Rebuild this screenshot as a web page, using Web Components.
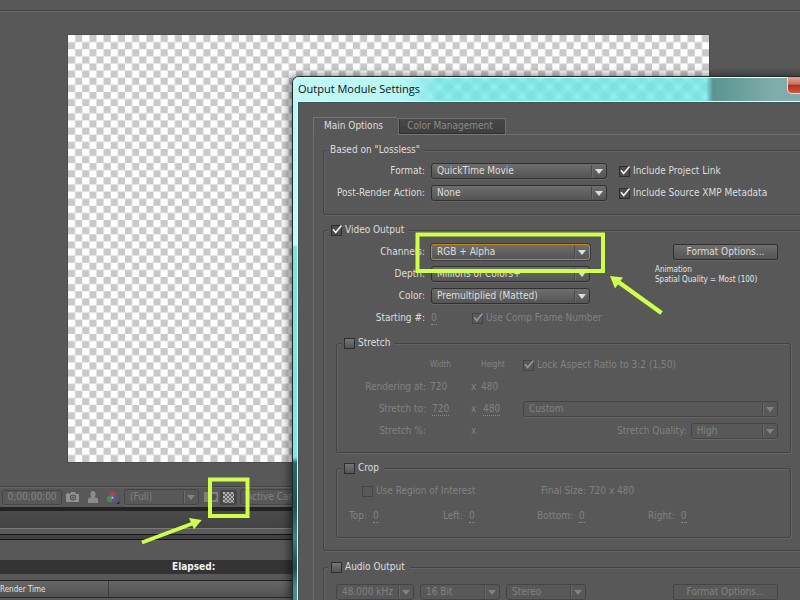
<!DOCTYPE html>
<html lang="en">
<head>
<meta charset="utf-8">
<title>Output Module Settings</title>
<style>
html,body{margin:0;height:100%;overflow:hidden;background:#585858}
body{font:10px/16px "DejaVu Sans Condensed","DejaVu Sans",sans-serif;color:#dedede}
</style>
</head>
<body>
<comp-workspace></comp-workspace>
<script>
function define(name, html, setup){
  customElements.define(name, class extends HTMLElement{
    connectedCallback(){
      if(this.shadowRoot) return;
      const t=document.createElement('template');
      t.innerHTML=html;
      this.attachShadow({mode:'open'}).append(t.content.cloneNode(true));
      if(setup) setup(this,this.shadowRoot);
    }
  });
}

/* Drop-down with an optional label in front */
define('ae-select', `
<style>
:host{display:flex;align-items:center;gap:6px;height:16px;color:#dedede}
label{flex:0 0 var(--label,auto);text-align:right;white-space:nowrap}
label:empty{display:none}
.box{flex:1;min-width:0;display:grid;grid-template-columns:1fr 15px;align-items:center;height:16px;box-sizing:border-box;
 border:1px solid #303030;border-radius:3px;background:linear-gradient(#6e6e6e,#545454);box-shadow:0 1px #666}
select{grid-area:1/1/2/3;appearance:none;border:0;outline:0;background:none;color:inherit;font:inherit;line-height:14px;height:14px;padding:0 16px 0 5px;margin:0;width:100%;opacity:1}
i{grid-area:1/2;pointer-events:none;height:12px;border-left:1px solid #484848;box-shadow:inset 1px 0 #6b6b6b;display:grid;place-items:center}
i::after{content:"";border:4px solid transparent;border-top:5px solid currentColor;border-bottom:0}
:host([hot]) .box{border-color:#c08a10;box-shadow:0 0 0 1px #3d3d3d}
:host([off]) .box{color:#828282;background:none;border-color:#454545}
:host([faded]){color:#828282;gap:4px}
</style><label for="s"></label><div class="box"><select id="s"><option></option></select><i></i></div>`,
(h,r)=>{const l=h.getAttribute('label')||'';r.querySelector('label').textContent=l;
 const s=r.querySelector('select');r.querySelector('option').textContent=h.getAttribute('value');
 if(!l)s.setAttribute('aria-label',h.getAttribute('name'));});

/* Tick box and its label */
define('ae-check', `
<style>
:host{display:flex;height:16px;color:#dedede}
label{display:flex;align-items:center;gap:3px;white-space:nowrap}
span{display:grid;width:11px;height:11px}
input,svg{grid-area:1/1;margin:0}
input{appearance:none;width:11px;height:11px;box-sizing:border-box;border:1px solid #2e2e2e;background:linear-gradient(#757575,#545454)}
svg{width:11px;height:11px;overflow:visible;pointer-events:none;display:none;color:#f0f0f0}
input:checked+svg{display:block}
input:checked{background:#4c4c4c}
:host([off]){color:#828282}
:host([off]) input{background:none;border-color:#454545}
:host([off]) svg{color:#9a9a9a}
</style><label><span><input type="checkbox"><svg viewBox="0 0 11 11" fill="none" stroke="currentColor" stroke-width="1.6"><path d="M2 4.300L4.700 7.500 10.500 .5"/></svg></span><slot></slot></label>`,
(h,r)=>{r.querySelector('input').checked=h.hasAttribute('checked');});

/* Editable number with a dotted underline */
define('ae-value', `
<style>
:host{display:inline-flex;align-items:center;gap:6px;height:16px;color:#828282}
label{flex:0 0 var(--label,auto);text-align:right;white-space:nowrap}
label:empty{display:none}
input{width:6px;height:13px;box-sizing:border-box;padding:0;margin:0;border:0;border-bottom:1px dotted #8a8a8a;background:none;color:#828282;font:inherit;line-height:12px;outline:0}
:host([wide]) input{width:17px}
:host([bright]) label{color:#dedede}
</style><label for="v"></label><input id="v" type="text">`,
(h,r)=>{const l=h.getAttribute('label')||'',i=r.querySelector('input');r.querySelector('label').textContent=l;
 i.value=h.getAttribute('value');if(!l)i.setAttribute('aria-label',h.getAttribute('name'));});

define('ae-button', `
<style>
:host{display:block;height:16px}
button{display:block;width:100%;height:16px;box-sizing:border-box;border:1px solid #303030;border-radius:2px;background:linear-gradient(#6e6e6e,#545454);box-shadow:0 1px #666;color:#dedede;font:inherit;line-height:14px;padding:0}
:host([off]) button{background:none;border-color:#454545;color:#828282}
</style><button type="button"><slot></slot></button>`);

/* Etched frame with a legend in its top border */
define('group-box', `
<style>
:host{display:block}
fieldset{display:block;min-width:0;margin:0;padding:var(--pad,0);border:1px solid #434343;border-radius:3px;box-shadow:1px 1px #656565,inset 1px 1px #656565}
legend{padding:0 5px 0 3px;margin-left:3px;height:16px;background:#585858}
:host([checkable]) legend{margin-left:4px}
</style><fieldset><legend><slot name="legend"></slot></legend><slot></slot></fieldset>`);

define('tab-strip', `
<style>
:host{display:flex;align-items:flex-end}
button{box-sizing:border-box;font:inherit;line-height:14px;margin:0;padding:0 0 2px;white-space:nowrap}
.on{width:84px;height:18px;border:1px solid #747474;border-width:1px 0 0 1px;background:#585858;color:#dedede;border-radius:1px 0 0;padding-right:4px}
.off{width:108px;height:17px;border:1px solid #707070;border-bottom-color:#777;background:linear-gradient(#484848,#3e3e3e);box-shadow:inset 1px 0 #303030,inset 0 -1px #303030;color:#8b8b8b;margin-left:1px;padding-right:4px}
hr{flex:1;margin:0;border:0;border-top:1px solid #6c6c6c}
</style><button class="on" type="button" role="tab" aria-selected="true">Main Options</button><button class="off" type="button" role="tab" aria-selected="false">Color Management</button><hr>`);

define('glass-window', `
<style>
:host{display:flex;flex-direction:column;box-sizing:border-box;border:1px solid #1d2b2b;border-right:0;border-bottom:0;border-radius:7px 0 0 0;overflow:hidden;
 box-shadow:-2px 0 9px 1px rgba(0,0,0,.5);
 background:linear-gradient(#b9f7f5,#c6faf9 168px,#82e0dd 170px,#82e8e4 380px,#27696a 386px,#1e5558 430px,#3d8385 460px,#1f4c50 490px,#4b8d8e 510px)}
header{display:flex;justify-content:space-between;height:24px;box-sizing:border-box;padding:2px 0 0 5px;border-top:1px solid #e4ffff;color:#0b1414;
 font:11px/18px "Open Sans","Noto Sans",sans-serif;
 background:linear-gradient(90deg,#c2f8f6 0,#b6f6f4 110px,#a0f2f000 145px,transparent 413px,#5a9491 420px,#80adaa 480px),
 repeating-linear-gradient(45deg,#72d6d855 0 5px,transparent 8px 11px,#72d6d855 13px),
 repeating-linear-gradient(-45deg,#72d6d855 0 5px,transparent 8px 11px,#72d6d855 13px),#8ef0ee}
h1{margin:0;font:inherit}
button{width:34px;height:17px;margin:-3px -15px 0 0;border:1px solid #f6d6d2;border-top:0;border-radius:0 0 5px 5px;padding:0;background:linear-gradient(#e0a39a,#cf7064 45%,#b02f1e 50%,#cc5b44)}
main{flex:1;min-height:0;overflow:hidden;margin-left:4px;box-sizing:border-box;padding:15px 0 0 15px;border:1px solid #d8ffff;border-width:1px 0 0 1px;background:#585858;box-shadow:inset 1px 1px #3b5555}
</style>
<header><h1><slot name="title"></slot></h1><button type="button" aria-label="Close"></button></header><main><slot></slot></main>`);

define('module-settings', `
<style>
:host{display:block}
.page{border-left:1px solid #6c6c6c;padding:7px 0 0 9px}
.row{display:grid;align-items:center;height:22px;white-space:nowrap}
.based{grid-template-columns:283px 1fr;column-gap:12px}
.video{grid-template-columns:266px 1fr 105px 27px}
.start{grid-template-columns:148px 1fr}
.info{font-size:8px;line-height:10px;width:122px;margin-top:2px;color:#e6e6e6;grid-area:1/3/2/5;margin-left:-18px}
.stretch{grid-template-columns:89px 41px 10px 42px 1fr;color:#828282}
.stretch>:first-child{text-align:right}
.small{font-size:8px}
.quality{grid-column:5;display:grid;grid-template-columns:1fr 161px}
.crop1{grid-template-columns:25px 179px 1fr;color:#828282}
.crop2{grid-template-columns:94px 94px 111px 1fr;margin:3px 0 0 12px}
.audio{grid-template-columns:78px 80px 80px 1fr 105px;column-gap:6px;padding:0 27px 0 12px}
.inner{margin:0 14px 0 12px}
.vgroup{--label:101px}
</style>
<tab-strip></tab-strip>
<div class="page">
 <group-box style="--pad:2px 0 10px">
  <span slot="legend">Based on "Lossless"</span>
  <div class="row based"><ae-select style="--label:101px" label="Format:" value="QuickTime Movie"></ae-select><ae-check checked>Include Project Link</ae-check></div>
  <div class="row based"><ae-select style="--label:101px" label="Post-Render Action:" value="None"></ae-select><ae-check checked>Include Source XMP Metadata</ae-check></div>
 </group-box>
 <group-box checkable style="margin-top:7px;--pad:3px 0 12px">
  <ae-check slot="legend" checked>Video Output</ae-check>
  <div class="vgroup">
  <div class="row video"><ae-select hot label="Channels:" value="RGB + Alpha"></ae-select><span></span><ae-button>Format Options...</ae-button></div>
  <div class="row video"><ae-select label="Depth:" value="Millions of Colors+"></ae-select><div class="info">Animation<br>Spatial Quality = Most (100)</div></div>
  <div class="row video"><ae-select label="Color:" value="Premultiplied (Matted)"></ae-select></div>
  <div class="row start"><ae-value bright label="Starting #:" value="0"></ae-value><ae-check off checked>Use Comp Frame Number</ae-check></div>
  </div>
  <group-box checkable class="inner" style="margin-top:6px;--pad:3px 12px 10px 0">
   <ae-check slot="legend">Stretch</ae-check>
   <div class="row stretch"><span></span><span class="small" style="padding-left:4px">Width</span><span></span><span class="small" style="padding-left:4px">Height</span><ae-check off checked style="margin-left:4px">Lock Aspect Ratio to 3:2 (1,50)</ae-check></div>
   <div class="row stretch"><span>Rendering at:</span><span style="padding-left:4px">720</span><span style="padding-left:4px">x</span><span style="padding-left:4px">480</span></div>
   <div class="row stretch"><span>Stretch to:</span><ae-value wide name="Stretch width" value="720" style="padding-left:6px"></ae-value><span style="padding-left:4px">x</span><ae-value wide name="Stretch height" value="480" style="padding-left:6px"></ae-value><ae-select off name="Stretch preset" value="Custom" style="margin-left:4px"></ae-select></div>
   <div class="row stretch"><span>Stretch %:</span><span></span><span style="padding-left:4px">x</span><div class="quality"><span></span><ae-select off faded label="Stretch Quality:" value="High"></ae-select></div></div>
  </group-box>
  <group-box checkable class="inner" style="margin-top:7px;--pad:4px 12px 10px 0">
   <ae-check slot="legend">Crop</ae-check>
   <div class="row crop1"><span></span><ae-check off>Use Region of Interest</ae-check><span>Final Size: 720 x 480</span></div>
   <div class="row crop2"><ae-value label="Top:" value="0"></ae-value><ae-value label="Left:" value="0"></ae-value><ae-value label="Bottom:" value="0"></ae-value><ae-value label="Right:" value="0"></ae-value></div>
  </group-box>
 </group-box>
 <group-box checkable style="margin-top:8px;--pad:6px 0 12px">
  <ae-check slot="legend">Audio Output</ae-check>
  <div class="row audio"><ae-select off name="Sample rate" value="48.000 kHz"></ae-select><ae-select off name="Sample size" value="16 Bit"></ae-select><ae-select off name="Channels" value="Stereo"></ae-select><span></span><ae-button off>Format Options...</ae-button></div>
 </group-box>
</div>`);

define('comp-viewer', `
<style>
:host{display:flex;flex-direction:column}
.top{height:10px;border-bottom:1px solid #444;box-shadow:0 1px #686868;flex:none}
.canvas{height:427px;flex:none;margin:24px 91px 24px 68px;display:block;outline:1px solid #4c4c4c}
.canvas svg{display:block;width:100%;height:100%}
.bar{display:flex;align-items:center;height:21px;border-top:1px solid #434343;box-shadow:inset 0 1px #666;color:#8a8a8a;padding-left:2px;box-sizing:border-box;white-space:nowrap}
.time{width:60px;height:15px;box-sizing:border-box;border:1px solid #454545;border-radius:2px;text-align:center;background:none;color:#858585;font:inherit;line-height:12px;padding:0;margin-right:4px;box-shadow:0 1px #646464}
.bar svg{display:block}
.icon{border:0;background:none;padding:0;margin:0 9px 0 0}
.full{width:75px;margin-right:5px}
.grid{border:1px solid #444;border-radius:2px;background:#484848;padding:0 2px;height:15px;margin:0 3px 0 2px;width:17px;box-sizing:border-box}
.cam{width:120px}
</style>
<div class="top"></div>
<div class="canvas"><svg viewBox="0 0 720 480" preserveAspectRatio="none" aria-hidden="true"><defs><pattern id="p" width="16" height="16" patternUnits="userSpaceOnUse"><path fill="#fff" d="M0 0h16v16H0z"/><path fill="#c9c9c9" d="M8 0h8v8H8zM0 8h8v8H0z"/></pattern></defs><path fill="url(#p)" d="M0 0h720v480H0z"/></svg></div>
<div class="bar">
 <button class="time" type="button">0;00;00;00</button>
 <button class="icon" type="button" aria-label="Take snapshot"><svg width="13" height="10" viewBox="0 0 13 10"><path fill="#929292" d="M0 2h1V1h2v1h1L5 0h4l1 2h3v8H0z"/><circle cx="7" cy="5.500" r="3" fill="#4c4c4c"/><circle cx="7" cy="5.500" r="2" fill="#929292"/><circle cx="7" cy="5.500" r="1" fill="#4c4c4c"/></svg></button>
 <button class="icon" style="margin-right:8px" type="button" aria-label="Show snapshot"><svg width="10" height="12" viewBox="0 0 10 12"><ellipse cx="5" cy="3" rx="2.600" ry="3" fill="#8c8c8c"/><path fill="#8c8c8c" d="M3.500 5h3v1.500H8.500L10 8v4H0V8l1.500-1.500h2z"/></svg></button>
 <button class="icon" style="margin-right:4px" type="button" aria-label="Show channel"><svg width="14" height="13" viewBox="0 0 14 13"><circle cx="6.500" cy="4" r="3.200" fill="#a04a4a"/><circle cx="4" cy="8" r="3.200" fill="#478a52"/><circle cx="9" cy="8" r="3.200" fill="#55559c"/><path fill="#b5b5b5" d="M6.500 5l1.500 2.700h-3z"/><path fill="#252525" d="M10.500 13l3-3v3z"/></svg></button>
 <ae-select class="full" off name="Resolution" value="(Full)"></ae-select>
 <button class="icon" style="margin:0" type="button" aria-label="Region of interest"><svg width="14" height="12" viewBox="0 0 14 12"><path fill="#808080" d="M0 1h4v10H0zM5 1h9v10H5z"/><circle cx="9.500" cy="6" r="3.200" fill="#505050"/></svg></button>
 <button class="grid" type="button" aria-label="Transparency grid"><svg width="11" height="11" viewBox="0 0 11 11"><defs><pattern id="q" width="4" height="4" patternUnits="userSpaceOnUse"><path fill="#626262" d="M0 0h4v4H0z"/><path fill="#b4b4b4" d="M0 0h2v2H0zM2 2h2v2H2z"/></pattern></defs><path fill="url(#q)" d="M0 0h11v11H0z"/></svg></button>
 <ae-select class="cam" off name="3D view" value="Active Camera"></ae-select>
</div>`);

define('render-queue', `
<style>
:host{display:block}
.a{height:17px;border-top:4px solid #232323;background:linear-gradient(#4a4a4a,#434343);border-bottom:1px solid #7b7b7b}
.b{height:5px;border-bottom:1px solid #151515;background:#5a5a5a}
.c{height:4px;background:#424242;border-bottom:1px solid #151515}
.d{height:20px;background:#585858}
.e{display:flex;height:14px;background:#333;color:#f0f0f0;font-weight:bold;line-height:14px;padding-left:172px}
.f{height:6px;background:#585858;border-bottom:1px solid #222}
.g{display:flex;height:16px;background:linear-gradient(#666,#525252);font-size:8px;line-height:18px;color:#e4e4e4;border-bottom:1px solid #2a2a2a}
.g span{width:108px;border-right:1px solid #3c3c3c;white-space:nowrap}
</style>
<div class="a"></div><div class="b"></div><div class="c"></div><div class="d"></div><div class="e">Elapsed:</div><div class="f"></div><div class="g"><span>Render Time</span></div>`);

/* Boxes and arrows laid over the windows */
define('call-outs', `
<style>:host{display:block;pointer-events:none}svg{display:block}</style>
<svg width="800" height="600" viewBox="0 0 800 600" fill="none" stroke="#d0ff4b" stroke-width="4" aria-hidden="true">
<path d="M210 479.500h37.500v36.500H210z"/><path d="M417.500 234.500h185.500v36.500h-185.500z"/>
<path d="M142 542.500L194 523"/><path fill="#d0ff4b" stroke="none" d="M189 518l12.700 2-7.700 9.300z"/>
<path stroke-width="4.500" d="M661.500 313L617 281"/><path fill="#d0ff4b" stroke="none" d="M610 276l13 1.500-8 11z"/>
</svg>`);

define('comp-workspace', `
<style>
:host{display:block;min-height:100vh;background:#585858}
glass-window{position:absolute;left:292px;top:76px;right:-6px;bottom:0}
call-outs{position:absolute;left:0;top:0}
</style>
<comp-viewer></comp-viewer>
<render-queue></render-queue>
<glass-window><span slot="title">Output Module Settings</span><module-settings></module-settings></glass-window>
<call-outs></call-outs>`);
</script>
</body>
</html>
